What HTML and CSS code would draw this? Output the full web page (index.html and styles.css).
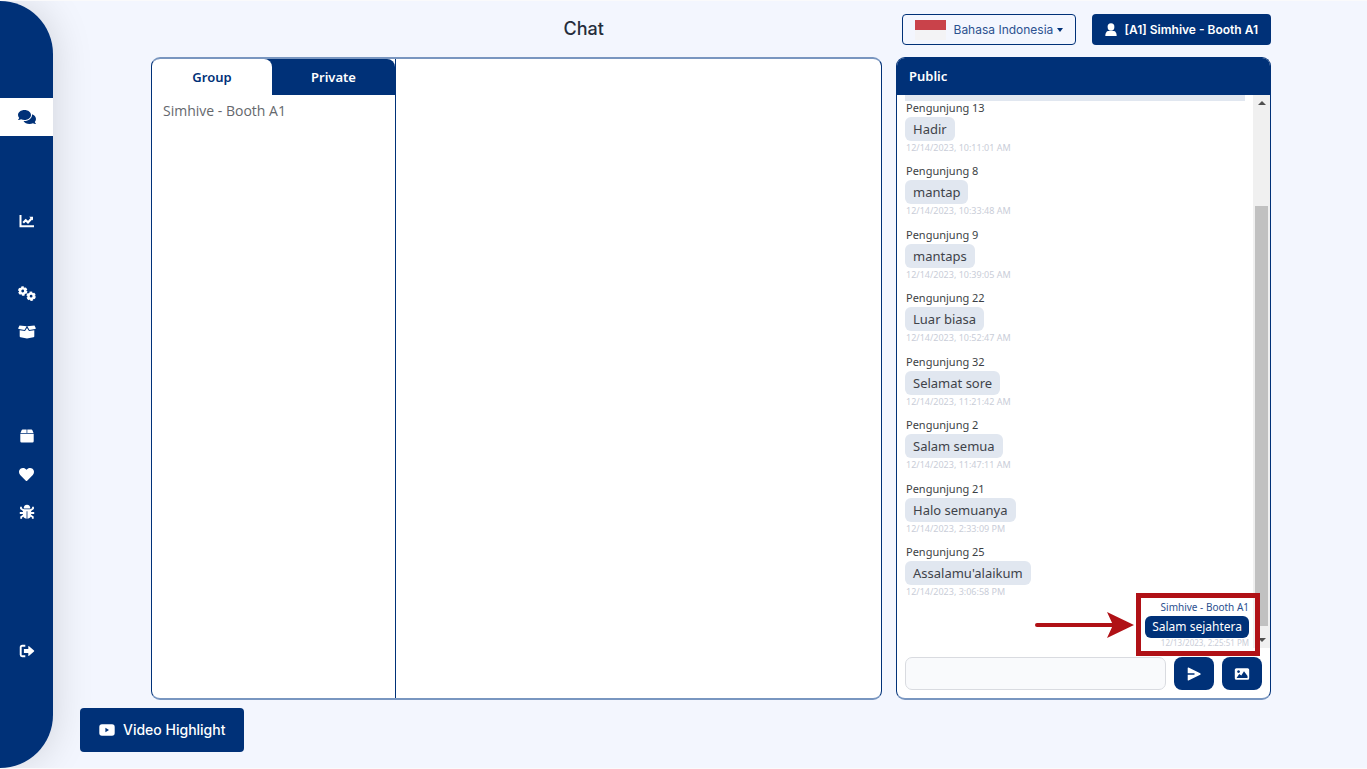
FILE: index.html
```html
<!DOCTYPE html>
<html lang="id">
<head>
<meta charset="utf-8">
<meta name="viewport" content="width=device-width, initial-scale=1">
<title>Chat</title>
<link rel="stylesheet" href="styles.css">
</head>
<body>
<nav class="sidebar" aria-label="Menu">
  <a class="nav-item active" href="#chat" aria-label="Chat"><svg width="18" height="16" viewBox="0 0 576 512"><path d="M416 192c0-88.400-93.100-160-208-160S0 103.600 0 192c0 34.300 14.100 65.900 38 92-13.400 30.200-35.500 54.200-35.800 54.500-2.200 2.300-2.800 5.700-1.500 8.700S4.800 352 8 352c36.600 0 66.900-12.300 88.700-25 32.200 15.700 70.300 25 111.300 25 114.900 0 208-71.600 208-160zm122 220c23.900-26 38-57.700 38-92 0-66.900-53.500-124.200-129.300-148.100.9 6.600 1.300 13.300 1.300 20.100 0 105.900-107.700 192-240 192-10.800 0-21.300-.8-31.700-1.900C207.800 439.600 281.800 480 368 480c41 0 79.100-9.200 111.300-25 21.800 12.700 52.100 25 88.700 25 3.200 0 6.100-1.900 7.300-4.800 1.300-2.900.7-6.300-1.500-8.700-.3-.3-22.400-24.200-35.800-54.500z"/></svg></a>
  <div class="nav-group">
    <a class="nav-item" href="#stats" aria-label="Statistik"><svg width="16" height="16" viewBox="0 0 16 16"><path d="M1.500 2v11.200h13.500" fill="none" stroke="currentColor" stroke-width="2"/><path d="M4.200 9.700 6.700 7.200l2.300 2.200L12.600 5.600" fill="none" stroke="currentColor" stroke-width="2.200"/><path d="M10.200 3.700H14v3.800z"/></svg></a>
  </div>
  <div class="nav-group near">
    <a class="nav-item" href="#settings" aria-label="Pengaturan"><svg width="18" height="16" viewBox="0 0 18 16"><g fill="none" stroke="currentColor"><circle cx="4.700" cy="5" r="2.600" stroke-width="2.400"/><circle cx="4.700" cy="5" r="3.800" stroke-width="1.800" stroke-dasharray="2.600 1.379"/><circle cx="13.100" cy="10.200" r="2.600" stroke-width="2.400"/><circle cx="13.100" cy="10.200" r="3.800" stroke-width="1.800" stroke-dasharray="2.600 1.379"/></g></svg></a>
    <a class="nav-item" href="#booth" aria-label="Booth"><svg width="18" height="14" viewBox="0 0 18 14"><path d="M1.500.4 8.700 1.300 6.500 5 .9 4.100Q0 3.900.3 3zM16.500.4 9.300 1.300 11.500 5l5.600-.9q.9-.2.600-1.100z"/><path d="M1.700 5.200 7 6.100 9 2.900l2 3.200 5.300-.9v6.100q0 .8-.9 1L9 13.400l-6.400-1.100q-.9-.2-.9-1z"/></svg></a>
  </div>
  <div class="nav-group">
    <a class="nav-item" href="#products" aria-label="Produk"><svg width="14" height="14" viewBox="0 0 14 14"><path d="M2.600.5h4V4H.5L1.600 1.200Q1.900.5 2.600.5zM7.300.5h4.100q.7 0 1 .7L13.500 4H7.300zM.3 4.700h13.400v7.500q0 1.300-1.300 1.300H1.600q-1.300 0-1.300-1.300z"/></svg></a>
    <a class="nav-item" href="#favorites" aria-label="Favorit"><svg width="15" height="15" viewBox="0 0 512 512"><path d="M462.300 62.600C407.500 15.900 326 24.300 275.700 76.200L256 96.500l-19.700-20.300C186.100 24.300 104.500 15.900 49.700 62.600c-62.800 53.600-66.100 149.800-9.900 207.900l193.500 199.800c12.500 12.900 32.800 12.900 45.300 0l193.500-199.800c56.300-58.100 53-154.300-9.800-207.900z"/></svg></a>
    <a class="nav-item" href="#bugs" aria-label="Laporkan bug"><svg width="16" height="16" viewBox="0 0 16 16"><path d="M4.700 4.600a3.300 3.800 0 0 1 6.600 0z"/><path d="M3.900 5.200h8.200v5.600q0 3.500-3.700 4V7.200h-.8v7.600q-3.700-.5-3.700-4z"/><path d="M4.800 6.500 2 4.500V2.800M11.200 6.500 14 4.500V2.800M4.600 9H.8M11.400 9h3.800M4.800 11.200 2.200 13v1.700M11.200 11.200l2.600 1.800v1.700" fill="none" stroke="currentColor" stroke-width="1.800"/></svg></a>
  </div>
  <div class="nav-group far">
    <a class="nav-item" href="#logout" aria-label="Keluar"><svg width="16" height="14" viewBox="0 0 16 14"><path d="M6.300 1.700H3.200q-1.500 0-1.500 1.500v7.600q0 1.500 1.500 1.500h3.100" fill="none" stroke="currentColor" stroke-width="1.900"/><path d="M4.900 4.900h4.400V2.600q0-1 .8-.3l4.900 4.200q.5.500 0 1l-4.900 4.200q-.8.700-.8-.3V9.100H4.900z"/></svg></a>
  </div>
</nav>

<div class="page">
  <header class="topbar">
    <h1 class="title">Chat</h1>
    <label class="language">
      <span class="flag"></span>
      <select class="language-select" aria-label="Bahasa"><option>Bahasa Indonesia</option></select>
      <span class="caret"></span>
    </label>
    <button class="account" type="button"><svg width="12" height="14" viewBox="0 0 12 14"><ellipse cx="6" cy="4" rx="3.400" ry="3.700"/><path d="M2.900 8h6.200q2.500.8 2.600 5H.3Q.4 8.800 2.900 8z"/></svg>[A1] Simhive - Booth A1</button>
  </header>

  <main class="workspace">
    <section class="conversations">
      <div class="rooms">
        <div class="tabs" role="tablist">
          <button class="tab selected" type="button" role="tab" aria-selected="true">Group</button>
          <button class="tab" type="button" role="tab" aria-selected="false">Private</button>
        </div>
        <a class="room" href="#room">Simhive - Booth A1</a>
      </div>
    </section>

    <section class="public">
      <h2 class="public-title">Public</h2>
      <div class="feed">
        <div class="messages">
          <div class="clipped"></div>
          <ul class="received">
            <li class="message"><span class="name">Pengunjung 13</span><span class="bubble">Hadir</span><time class="time">12/14/2023, 10:11:01 AM</time></li>
            <li class="message"><span class="name">Pengunjung 8</span><span class="bubble">mantap</span><time class="time">12/14/2023, 10:33:48 AM</time></li>
            <li class="message"><span class="name">Pengunjung 9</span><span class="bubble">mantaps</span><time class="time">12/14/2023, 10:39:05 AM</time></li>
            <li class="message"><span class="name">Pengunjung 22</span><span class="bubble">Luar biasa</span><time class="time">12/14/2023, 10:52:47 AM</time></li>
            <li class="message"><span class="name">Pengunjung 32</span><span class="bubble">Selamat sore</span><time class="time">12/14/2023, 11:21:42 AM</time></li>
            <li class="message"><span class="name">Pengunjung 2</span><span class="bubble">Salam semua</span><time class="time">12/14/2023, 11:47:11 AM</time></li>
            <li class="message"><span class="name">Pengunjung 21</span><span class="bubble">Halo semuanya</span><time class="time">12/14/2023, 2:33:09 PM</time></li>
            <li class="message"><span class="name">Pengunjung 25</span><span class="bubble">Assalamu'alaikum</span><time class="time">12/14/2023, 3:06:58 PM</time></li>
          </ul>
          <div class="message own"><span class="name">Simhive - Booth A1</span><span class="bubble">Salam sejahtera</span><time class="time">12/13/2023, 2:25:51 PM</time></div>
        </div>
        <div class="scrollbar">
          <span class="arrow-up"></span>
          <span class="track-above"></span>
          <span class="thumb"></span>
          <span class="track-below"></span>
          <span class="arrow-down"></span>
        </div>
      </div>
      <form class="composer">
        <input class="composer-input" type="text" aria-label="Pesan">
        <button class="composer-button" type="button" aria-label="Kirim"><svg width="14" height="14" viewBox="0 0 14 14"><path d="M.7 1.200Q.5.200 1.500.6l11.700 5.600q1 .8 0 1.600L1.500 13.400q-1 .4-.8-.6V7.700h6.800V6.300H.7z"/></svg></button>
        <button class="composer-button" type="button" aria-label="Gambar"><svg width="16" height="14" viewBox="0 0 16 14"><path fill-rule="evenodd" d="M2.400 1.200h11.200q1.600 0 1.600 1.600v8.400q0 1.600-1.600 1.600H2.400q-1.600 0-1.600-1.600V2.800q0-1.600 1.600-1.600zM4.500 3.200a1.400 1.400 0 1 0 .1 0zM2.600 11h10.900V9L10 4.300 7.300 8.400 5.200 7z"/></svg></button>
      </form>
      <div class="callout"></div>
      <svg class="pointer" width="99" height="26" viewBox="0 0 99 26"><path d="M2 13h80" stroke="currentColor" stroke-width="4" stroke-linecap="round"/><path d="M72 0 99 13 72 26l6-13z"/></svg>
    </section>
  </main>

  <button class="video" type="button"><svg width="16" height="12" viewBox="0 0 16 12"><path fill-rule="evenodd" d="M3 .3h10q2.700 0 2.700 2.700v6q0 2.700-2.700 2.700H3Q.3 11.700.3 9V3Q.3.300 3 .3zM6.400 3.800v4.400L10 6z"/></svg>Video Highlight</button>
</div>
</body>
</html>
```
FILE: styles.css
```css
:root {
  --navy: #003178;
  --line: #7996c0;
  --page: #f3f6fe;
  --mark: #b01116;
  --sans: "Noto Sans", "Open Sans", sans-serif;
  --display: Inter, "Noto Sans", sans-serif;
}

* { box-sizing: border-box; }

body {
  margin: 0;
  min-height: 100vh;
  display: flex;
  background: var(--page);
  border-top: 1px solid #fafafb;
  border-bottom: 1px solid #fafafb;
  font-family: var(--sans);
}

button, select, input { font: inherit; margin: 0; }
svg { fill: currentColor; display: block; }

.sidebar {
  flex: 0 0 53px;
  padding: 97px 0;
  display: flex;
  flex-direction: column;
  background: var(--navy);
  border-radius: 0 54px 54px 0;
  box-shadow: 0 0 40px rgba(0, 0, 0, 0.15);
}
.nav-item {
  height: 38px;
  display: flex;
  align-items: center;
  justify-content: center;
  color: #fff;
}
.nav-item.active { background: #fff; color: var(--navy); }
.nav-group { margin-top: 66px; }
.nav-group.near { margin-top: 35px; }
.nav-group.far { margin-top: 101px; }

.page {
  flex: 1;
  min-width: 0;
  display: flex;
  flex-direction: column;
  padding: 13px 96px 16px 27px;
}

.topbar {
  display: flex;
  align-items: center;
  gap: 16px;
  padding-left: 202px;
}
.title {
  flex: 1;
  margin: 0;
  padding-bottom: 2px;
  text-align: center;
  font: 500 18px/24px var(--display);
  color: #252d3b;
}
.language {
  display: flex;
  align-items: center;
  height: 31px;
  padding: 0 12px;
  border: 1px solid var(--navy);
  border-radius: 4px;
  color: #2c5190;
}
.flag {
  width: 31px;
  height: 20px;
  margin-right: 8px;
  background: linear-gradient(#c9424a 50%, #f3f3f5 50%);
}
.language-select {
  appearance: none;
  border: 0;
  padding: 0;
  background: transparent;
  color: inherit;
  font: 400 12px/20px var(--display);
}
.caret {
  margin-left: 3px;
  border: 3px solid transparent;
  border-top: 4px solid var(--navy);
  border-bottom: 0;
}
.account {
  display: flex;
  align-items: center;
  gap: 8px;
  height: 31px;
  padding: 0 13px;
  border: 0;
  border-radius: 4px;
  background: var(--navy);
  color: #fff;
  font: 600 12px/20px var(--display);
}

.workspace {
  flex: 1;
  display: grid;
  grid-template-columns: 731fr 375fr;
  gap: 14px;
  margin: 12px 0 8px;
  padding-left: 71px;
}
.conversations, .public {
  min-width: 0;
  border: 1px solid var(--navy);
  border-bottom: 2px solid var(--line);
  border-radius: 9px;
  background: #fff;
  overflow: hidden;
}
.conversations { display: flex; border-top: 2px solid var(--line); }
.rooms { width: 244px; border-right: 1px solid var(--navy); }
.tabs {
  display: flex;
  height: 36px;
  background: var(--navy);
  border-radius: 0 8px 0 0;
}
.tab {
  flex: 1;
  border: 0;
  padding: 0;
  background: transparent;
  color: #fff;
  font-size: 13px;
  font-weight: 600;
}
.tab.selected {
  flex: 0 0 120px;
  background: #fff;
  color: var(--navy);
  border-radius: 0 8px 0 0;
}
.room {
  display: block;
  padding: 6px 11px;
  color: #65686d;
  font-family: "Open Sans", "Noto Sans", sans-serif;
  font-size: 14px;
  line-height: 20px;
  text-decoration: none;
}

.public { position: relative; display: flex; flex-direction: column; }
.public-title {
  margin: 0;
  padding: 0 12px;
  background: var(--navy);
  color: #fff;
  font-size: 13px;
  font-weight: 600;
  line-height: 37px;
}
.feed { flex: 1; display: flex; }
.messages {
  flex: 1;
  display: flex;
  flex-direction: column;
  padding: 0 4px 0 8px;
}
.clipped { height: 6px; margin-right: 4px; background: #e1e7f0; }
.received {
  flex: 1;
  display: flex;
  flex-direction: column;
  justify-content: space-between;
  margin: 0;
  padding: 0;
  list-style: none;
}
.message {
  display: flex;
  flex-direction: column;
  align-items: flex-start;
}
.name { padding-left: 1px; font-size: 11px; line-height: 14px; color: #3c3f45; }
.bubble {
  margin: 2px 0 1px;
  padding: 0 8px;
  border-radius: 6px;
  background: #e1e7f0;
  color: #3f434a;
  font-size: 13px;
  line-height: 24px;
}
.time { padding-left: 1px; font-size: 9px; line-height: 12px; color: #c9cdd8; }
.own { align-items: flex-end; padding: 2px 0 0; }
.own .name { font-size: 10px; color: #2c5190; }
.own .bubble {
  margin-bottom: 0;
  padding: 0 7px;
  background: var(--navy);
  color: #fff;
  font-size: 12px;
  line-height: 22px;
}
.own .time { font-size: 8px; line-height: 10px; }

.scrollbar {
  width: 17px;
  display: flex;
  flex-direction: column;
  align-items: center;
  background: #f0f0f0;
}
.arrow-up, .arrow-down { border: 4px solid transparent; margin: 6px 0; }
.arrow-up { border-top: 0; border-bottom-color: #505050; }
.arrow-down { border-bottom: 0; border-top-color: #505050; }
.track-above { flex: 95; }
.thumb { flex: 418; width: 13px; background: #c1c1c1; }
.track-below { flex: 6; }

.composer { display: flex; gap: 8px; padding: 9px 8px 8px; }
.composer-input {
  flex: 1;
  min-width: 0;
  height: 33px;
  padding: 0 8px;
  border: 1px solid #d9dbe0;
  border-radius: 7px;
  background: #f9fafc;
}
.composer-button {
  width: 40px;
  height: 33px;
  display: flex;
  align-items: center;
  justify-content: center;
  border: 0;
  border-radius: 8px;
  background: var(--navy);
  color: #fff;
}

.callout {
  position: absolute;
  right: 10px;
  bottom: 42px;
  width: 124px;
  height: 63px;
  border: 5px solid var(--mark);
}
.pointer { position: absolute; right: 136px; bottom: 60px; color: var(--mark); }

.video {
  align-self: flex-start;
  display: flex;
  align-items: center;
  gap: 8px;
  height: 44px;
  padding: 0 19px;
  border: 0;
  border-radius: 4px;
  background: var(--navy);
  color: #fff;
  font: 500 14px/20px var(--display);
}
```
